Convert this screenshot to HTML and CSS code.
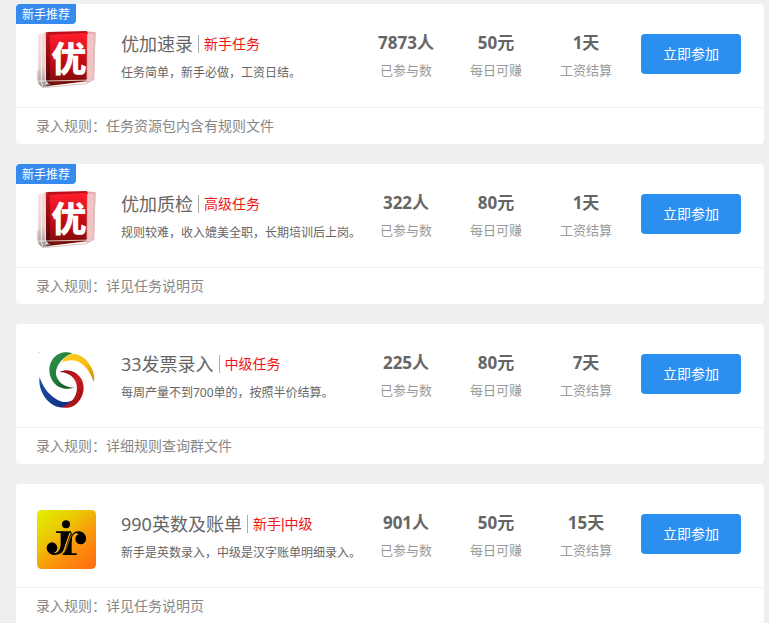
FILE: index.html
```html
<!DOCTYPE html>
<html lang="zh-CN">
<head>
<meta charset="utf-8">
<meta name="viewport" content="width=device-width, initial-scale=1">
<title>任务列表</title>
<link rel="stylesheet" href="styles.css">
</head>
<body>
<svg class="defs" width="0" height="0" aria-hidden="true">
  <defs>
    <linearGradient id="face" x1="0" y1="0" x2="0" y2="1">
      <stop offset="0" stop-color="#ff1f2d"/><stop offset=".35" stop-color="#dc0f1c"/><stop offset=".7" stop-color="#a80810"/><stop offset="1" stop-color="#6e1206"/>
    </linearGradient>
    <linearGradient id="side" x1="0" y1="0" x2="0" y2="1">
      <stop offset="0" stop-color="#c01822"/><stop offset=".5" stop-color="#8a0810"/><stop offset="1" stop-color="#4a0a08"/>
    </linearGradient>
    <linearGradient id="glass" x1="0" y1="0" x2="0" y2="1">
      <stop offset="0" stop-color="#f4dcdc"/><stop offset=".6" stop-color="#ecd0d0"/><stop offset="1" stop-color="#9a9090"/>
    </linearGradient>
    <linearGradient id="shade" x1="0" y1="0" x2="1" y2="0">
      <stop offset="0" stop-color="#fff"/><stop offset="1" stop-color="#777"/>
    </linearGradient>
    <symbol id="cube" viewBox="30 30 180 180">
      <path d="M30 154 L46 148 L46 194 L32 180Z" fill="url(#shade)"/>
      <path d="M37 42 L58 38 L62 188 L50 203 L37 192Z" fill="url(#glass)"/>
      <path d="M182 34 L209 37 L204 180 L182 190Z" fill="#eaa6a8"/>
      <path d="M185 38 L204 41 L200 174 L185 180Z" fill="#f3c4c5"/>
      <path d="M60 36 L182 33 L187 42 L73 48Z" fill="#b9101b"/>
      <path d="M58 37 L74 46 L74 196 L60 184Z" fill="url(#side)"/>
      <path d="M72 44 L183 39 L182 184 L72 197Z" fill="url(#face)"/>
      <path d="M38 45 L46 41 V184 L50 201 M58 40 V184 M38 183 H60 L205 180" fill="none" stroke="#fff" stroke-width="3" opacity=".75"/>
      <path d="M207 38 L203 178 L180 191 L50 203" fill="none" stroke="#dcc4c4" stroke-width="3"/>
      <path d="M50 200 L70 188 L76 198Z" fill="#6e6260"/>
      <text class="cube-char" x="76" y="156">优</text>
    </symbol>
    <linearGradient id="green" x1="0" y1="0" x2="1" y2="1"><stop offset="0" stop-color="#35934d"/><stop offset=".5" stop-color="#1f7a38"/><stop offset="1" stop-color="#0b4b1e"/></linearGradient>
    <linearGradient id="yellow" x1="0" y1="0" x2="1" y2="1"><stop offset="0" stop-color="#ffd028"/><stop offset=".6" stop-color="#f7b90c"/><stop offset="1" stop-color="#c58a00"/></linearGradient>
    <linearGradient id="blue" x1="0" y1="0" x2="1" y2="1"><stop offset="0" stop-color="#2350a8"/><stop offset="1" stop-color="#0a2b80"/></linearGradient>
    <linearGradient id="red" x1="0" y1="0" x2="1" y2="1"><stop offset="0" stop-color="#8f1015"/><stop offset=".5" stop-color="#c91c20"/><stop offset="1" stop-color="#8b0a0e"/></linearGradient>
    <symbol id="swirl" viewBox="30 30 180 180">
      <circle cx="38" cy="38" r="2" fill="#bbb"/>
      <path d="M139 41 C159 40 182 55 194 79 C202 94 207 108 204 126 C188 84 158 44 107 68 C116 51 125 43 139 41Z" fill="url(#yellow)"/>
      <path d="M139 40 C122 33 97 36 82 55 C67 73 66 101 79 122 C92 142 116 152 145 143 C118 142 99 129 92 110 C83 82 110 50 139 40Z" fill="url(#green)"/>
      <path d="M41 111 C36 136 49 170 72 188 C86 200 103 204 118 202 C133 196 145 187 151 172 C134 190 110 190 89 176 C66 162 49 138 41 111Z" fill="url(#blue)"/>
      <path d="M101 96 C126 83 158 96 169 123 C179 149 169 178 148 194 C136 203 120 205 106 202 C128 194 147 180 152 154 C157 124 139 98 101 96Z" fill="url(#red)"/>
    </symbol>
    <linearGradient id="sun" x1="0" y1="0" x2=".8" y2="1">
      <stop offset="0" stop-color="#dff000"/><stop offset=".35" stop-color="#eacb04"/><stop offset=".7" stop-color="#fc920c"/><stop offset="1" stop-color="#ff7410"/>
    </linearGradient>
    <symbol id="monogram" viewBox="30 30 180 180">
      <rect x="33" y="30" width="177" height="177" rx="14" fill="url(#sun)"/>
      <circle cx="120" cy="73" r="12"/>
      <circle cx="78" cy="143" r="16"/>
      <circle cx="164" cy="117" r="16"/>
      <path d="M90 94 H135 V99 H130 L112 151 C108 160 98 166 83 165 C72 164 64 156 62 145 L76 151 C82 162 93 162 99 151 C103 145 104 139 104 132 V99 H90Z"/>
      <path d="M132 104 L138 97 V120 L125 151 C122 159 117 163 110 165 V160 C114 158 116 153 118 147Z"/>
      <path d="M180 117 C180 101 169 94 157 94 C143 94 137 104 133 115 L116 158 C114 162 112 164 109 165 H152 V160 H137 V118 C138 108 144 99 152 99 L160 106Z"/>
      <path d="M137 103 L118 151 Q114 161 106 163" fill="none" stroke="#f4a60b" stroke-width="2"/>
    </symbol>
  </defs>
</svg>

<main class="tasks">
  <article class="card">
    <span class="badge">新手推荐</span>
    <div class="card-main">
      <svg class="logo" role="img" aria-label="优加"><use href="#cube"/></svg>
      <div class="info">
        <div class="heading"><h2 class="title">优加速录</h2><span class="level">新手任务</span></div>
        <p class="desc">任务简单，新手必做，工资日结。</p>
      </div>
      <dl class="stats">
        <div class="stat"><dd>7873人</dd><dt>已参与数</dt></div>
        <div class="stat"><dd>50元</dd><dt>每日可赚</dt></div>
        <div class="stat"><dd>1天</dd><dt>工资结算</dt></div>
      </dl>
      <button class="join" type="button">立即参加</button>
    </div>
    <p class="rule">录入规则：任务资源包内含有规则文件</p>
  </article>

  <article class="card">
    <span class="badge">新手推荐</span>
    <div class="card-main">
      <svg class="logo" role="img" aria-label="优加"><use href="#cube"/></svg>
      <div class="info">
        <div class="heading"><h2 class="title">优加质检</h2><span class="level">高级任务</span></div>
        <p class="desc">规则较难，收入媲美全职，长期培训后上岗。</p>
      </div>
      <dl class="stats">
        <div class="stat"><dd>322人</dd><dt>已参与数</dt></div>
        <div class="stat"><dd>80元</dd><dt>每日可赚</dt></div>
        <div class="stat"><dd>1天</dd><dt>工资结算</dt></div>
      </dl>
      <button class="join" type="button">立即参加</button>
    </div>
    <p class="rule">录入规则：详见任务说明页</p>
  </article>

  <article class="card">
    <div class="card-main">
      <svg class="logo" role="img" aria-label="33发票"><use href="#swirl"/></svg>
      <div class="info">
        <div class="heading"><h2 class="title">33发票录入</h2><span class="level">中级任务</span></div>
        <p class="desc">每周产量不到700单的，按照半价结算。</p>
      </div>
      <dl class="stats">
        <div class="stat"><dd>225人</dd><dt>已参与数</dt></div>
        <div class="stat"><dd>80元</dd><dt>每日可赚</dt></div>
        <div class="stat"><dd>7天</dd><dt>工资结算</dt></div>
      </dl>
      <button class="join" type="button">立即参加</button>
    </div>
    <p class="rule">录入规则：详细规则查询群文件</p>
  </article>

  <article class="card">
    <div class="card-main">
      <svg class="logo" role="img" aria-label="990英数"><use href="#monogram"/></svg>
      <div class="info">
        <div class="heading"><h2 class="title">990英数及账单</h2><span class="level">新手|中级</span></div>
        <p class="desc">新手是英数录入，中级是汉字账单明细录入。</p>
      </div>
      <dl class="stats">
        <div class="stat"><dd>901人</dd><dt>已参与数</dt></div>
        <div class="stat"><dd>50元</dd><dt>每日可赚</dt></div>
        <div class="stat"><dd>15天</dd><dt>工资结算</dt></div>
      </dl>
      <button class="join" type="button">立即参加</button>
    </div>
    <p class="rule">录入规则：详见任务说明页</p>
  </article>
</main>
</body>
</html>
```
FILE: styles.css
```css
* {
  box-sizing: border-box;
}

body {
  margin: 0;
  background: #efefef;
  color: #666;
  font-family: "Noto Sans", "Noto Sans CJK SC", sans-serif;
}

h2, p, dl, dd, dt {
  margin: 0;
}

.defs {
  position: absolute;
}

.tasks {
  display: grid;
  gap: 20px;
  padding: 4px 5px 0 16px;
}

.card {
  position: relative;
  background: #fff;
  border-radius: 4px;
}

.badge {
  position: absolute;
  top: 0;
  left: 0;
  padding: 2px 6px 0;
  border-radius: 4px 0 4px 0;
  background: #368bef;
  color: #fff;
  font-size: 12px;
  line-height: 18px;
}

.card-main {
  display: flex;
  align-items: flex-start;
  padding: 26px 23px 17px 20px;
  border-bottom: 1px solid #eee;
}

.logo {
  flex: none;
  width: 60px;
  height: 60px;
  margin-right: 25px;
}

.cube-char {
  fill: #fff;
  font: 900 106px "Noto Sans CJK SC", sans-serif;
}

.info {
  flex: 1;
  min-width: 0;
  white-space: nowrap;
}

.heading {
  display: flex;
  align-items: center;
  height: 28px;
}

.title {
  font-size: 18px;
  font-weight: 400;
  line-height: 28px;
}

.level {
  margin-left: 5px;
  padding-left: 5px;
  border-left: 1px solid #aaa;
  color: #f01414;
  font-family: "Liberation Sans", "Noto Sans CJK SC", sans-serif;
  font-size: 14px;
  line-height: 18px;
}

.desc {
  font-size: 12px;
  line-height: 30px;
}

.stats {
  display: flex;
  flex: none;
}

.stat {
  width: 90px;
  text-align: center;
  white-space: nowrap;
}

.stat dd {
  font-size: 17px;
  font-weight: 700;
  line-height: 26px;
}

.stat dt {
  color: #999;
  font-size: 13px;
  line-height: 28px;
}

.join {
  flex: none;
  width: 100px;
  height: 40px;
  margin: 4px 0 0 10px;
  padding: 0 0 2px;
  border: 0;
  border-radius: 4px;
  background: #2b8ff0;
  color: #fff;
  font: inherit;
  font-size: 14px;
  cursor: pointer;
}

.rule {
  padding: 0 20px;
  color: #888;
  font-size: 14px;
  line-height: 36px;
}
```
